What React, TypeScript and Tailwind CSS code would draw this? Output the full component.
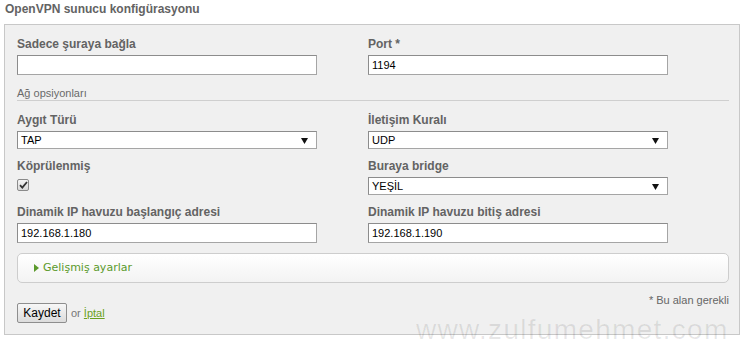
// OpenVPN server configuration form

const Label = ({ children }: { children: React.ReactNode }) => (
  <div className="h-[16px] leading-[16px] text-[12px] font-bold text-[#636363]">{children}</div>
);

const TextInput = ({ value }: { value?: string }) => (
  <div className="mt-[3px] w-[300px] h-[20px] bg-white border border-[#a5a5a5] border-t-[#8c8c8c] border-l-[#8c8c8c] px-[3px] text-[11px] leading-[18px] text-black">
    {value}
  </div>
);

const Select = ({ value }: { value: string }) => (
  <div className="mt-[3px] w-[300px] h-[18px] bg-white border border-[#a5a5a5] border-t-[#8c8c8c] border-l-[#8c8c8c] pl-[3px] pr-[8px] flex items-center justify-between text-[11px] text-black">
    <span>{value}</span>
    <svg width="7" height="7" viewBox="0 0 7 7">
      <path d="M0 1 L7 1 L3.5 7 Z" fill="#111" />
    </svg>
  </div>
);

export default function App() {
  return (
    <div className="relative w-[746px] h-[344px] overflow-hidden bg-white font-['Liberation_Sans',Arial,sans-serif]">
      <div className="pl-[5px] pt-[1px] h-[24px] text-[12px] leading-[16px] font-bold text-[#636363]">
        OpenVPN sunucu konfigürasyonu
      </div>

      <div className="ml-[4px] w-[736px] h-[311px] bg-[#f0f0f0] border border-[#c8c8c8] pl-[12px] pr-[10px] pt-[11px]">
        {/* Bind / Port */}
        <div className="grid grid-cols-[351px_1fr]">
          <div>
            <Label>Sadece şuraya bağla</Label>
            <TextInput />
          </div>
          <div>
            <Label>Port *</Label>
            <TextInput value="1194" />
          </div>
        </div>

        {/* Network options */}
        <div className="mt-[11px] h-[15px] border-b border-[#cfcfcf] text-[11px] leading-[14px] text-[#6a6a6a]">
          Ağ opsiyonları
        </div>

        <div className="mt-[11px] grid grid-cols-[351px_1fr] gap-y-[9px]">
          <div>
            <Label>Aygıt Türü</Label>
            <Select value="TAP" />
          </div>
          <div>
            <Label>İletişim Kuralı</Label>
            <Select value="UDP" />
          </div>

          <div>
            <Label>Köprülenmiş</Label>
            <div className="mt-[5px] w-[12px] h-[12px] rounded-[2px] border border-[#8a8a8a] bg-gradient-to-b from-[#f4f4f4] to-[#d9d9d9] flex items-center justify-center">
              <svg width="9" height="8" viewBox="0 0 9 8">
                <path d="M1 4.2 L3.3 6.6 L8 1" stroke="#333" strokeWidth="1.8" fill="none" />
              </svg>
            </div>
          </div>
          <div>
            <Label>Buraya bridge</Label>
            <Select value="YEŞİL" />
          </div>

          <div>
            <Label>Dinamik IP havuzu başlangıç adresi</Label>
            <TextInput value="192.168.1.180" />
          </div>
          <div>
            <Label>Dinamik IP havuzu bitiş adresi</Label>
            <TextInput value="192.168.1.190" />
          </div>
        </div>

        {/* Advanced */}
        <div className="mt-[10px] h-[30px] rounded-[5px] border border-[#cdcdcd] bg-gradient-to-b from-[#ffffff] to-[#f3f3f3] pl-[16px] flex items-center gap-[4px] font-['DejaVu_Sans',Verdana,sans-serif] text-[11px] text-[#5b9a2c]">
          <svg width="5" height="8" viewBox="0 0 5 8">
            <path d="M0 0 L5 4 L0 8 Z" fill="#5b9a2c" />
          </svg>
          <span>Gelişmiş ayarlar</span>
        </div>

        <div className="mt-[10px] h-[14px] text-right text-[11px] leading-[14px] text-[#666]">* Bu alan gerekli</div>

        <div className="mt-[-4px] flex items-center gap-[4px] text-[11px] text-[#777]">
          <button className="w-[50px] h-[20px] border border-[#8e8e8e] rounded-[2px] bg-gradient-to-b from-[#f7f7f7] to-[#dcdcdc] text-[12px] text-black">
            Kaydet
          </button>
          <span>
            or <a className="text-[#6aa020] underline">İptal</a>
          </span>
        </div>
      </div>

      {/* watermark */}
      <div className="absolute left-[416px] top-[317px] text-[28px] tracking-[1.3px] leading-[26px] text-black/[0.09] whitespace-nowrap">
        www.zulfumehmet.com
      </div>
    </div>
  );
}
